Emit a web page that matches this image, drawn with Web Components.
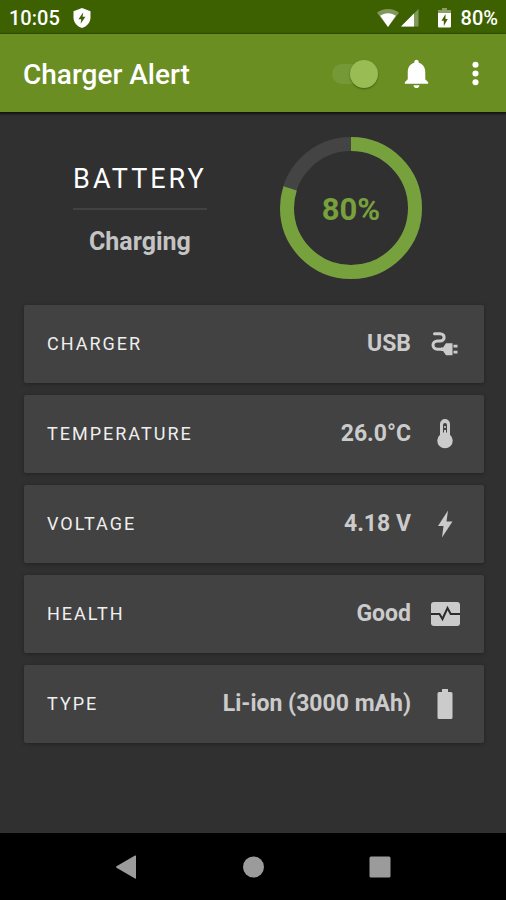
<!DOCTYPE html>
<html lang="en">
<head>
<meta charset="UTF-8">
<meta name="viewport" content="width=device-width, initial-scale=1">
<title>Charger Alert</title>
<style>
  body {
    margin: 0;
    background: #303030;
    font-family: Roboto, "Liberation Sans", sans-serif;
  }
</style>
</head>
<body>
<charger-app></charger-app>

<script>
const ICONS = {
  plug: `
    <path d="M4.500 4.800H10c5.500 0 5.500 7.200 0 7.200H7.500c-6 0-6 8.200 0 8.200H12" fill="none" stroke="currentColor" stroke-width="3" stroke-linecap="round"/>
    <path d="M11 18.500h2l3-4.300h6.500v12H16l-3-4.300h-2zM23.500 15.800h4v2.800h-4zM23.500 21.800h4v2.800h-4z"/>`,
  thermometer: `
    <path fill-rule="evenodd" d="M15 0a5 5 0 0 0-5 5v10.800a7.700 7.700 0 1 0 10 0V5a5 5 0 0 0-5-5zm0 4a2 2 0 0 1 2 2v7.500h-1V11h-2v2.500h-1V6a2 2 0 0 1 2-2zm-.8 3v2h1.600V7z"/>`,
  bolt: `<path d="M18 1.500 8 17h5.500L12 28.500 22.500 12.500h-6z"/>`,
  health: `
    <rect x="1" y="3" width="29" height="24" rx="3"/>
    <path d="M1 15h8.500l3 5 5-11 3.200 6H30" fill="none" stroke="#2c2c2c" stroke-width="2"/>`,
  battery: `<path d="M12 0h6v3h3q1.500 0 1.500 1.500v24q0 1.500-1.500 1.500H9q-1.500 0-1.500-1.500v-24Q7.500 3 9 3h3z"/>`
};

const STATS = [
  { label: "CHARGER", value: "USB", icon: "plug" },
  { label: "TEMPERATURE", value: "26.0°C", icon: "thermometer" },
  { label: "VOLTAGE", value: "4.18 V", icon: "bolt" },
  { label: "HEALTH", value: "Good", icon: "health" },
  { label: "TYPE", value: "Li-ion (3000 mAh)", icon: "battery" }
];

class StatusBar extends HTMLElement {
  constructor() {
    super();
    this.attachShadow({ mode: "open" });
  }

  connectedCallback() {
    this.shadowRoot.innerHTML = /* html */`
      <style>
        :host {
          display: flex;
          justify-content: space-between;
          align-items: center;
          box-sizing: border-box;
          height: 34px;
          padding: 2px 8px 0 9px;
          background: #3d6100;
          color: #fff;
          font-size: 20px;
          font-weight: 500;
          line-height: 24px;
        }
        .group { display: flex; align-items: center; }
        svg { display: block; fill: currentColor; }
        .shield { margin-left: 13px; }
        .signal { margin-left: 2px; }
        .battery { margin: 0 10px 0 19px; }
      </style>
      <div class="group">
        <span>10:05</span>
        <svg class="shield" width="18" height="20" viewBox="0 0 18 20" aria-hidden="true">
          <path fill-rule="evenodd" d="M9 0 .500 3.200V9.500C.500 14.500 4 18.500 9 20c5-1.500 8.500-5.500 8.500-10.500V3.200zm1.200 4.200L5.500 11.300h2.800l-.7 4.500 4.900-7H9.600z"/>
        </svg>
      </div>
      <div class="group">
        <svg width="22" height="18" viewBox="0 0 22 18" aria-hidden="true">
          <path opacity=".35" d="M11 0C6.500 0 2.700 1.500 0 3.800L11 18 22 3.800C19.300 1.500 15.500 0 11 0z"/>
          <path d="M11 4.300c-3.100 0-5.700.9-7.800 2.500L11 18l7.800-11.200C16.700 5.200 14.100 4.300 11 4.300z"/>
        </svg>
        <svg class="signal" width="18" height="18" viewBox="0 0 18 18" aria-hidden="true">
          <path opacity=".35" d="M0 17.500 17.500 0v17.500z"/>
          <path d="M0 17.500 13 4.500v13z"/>
        </svg>
        <svg class="battery" width="13" height="20" viewBox="0 0 13 20" aria-hidden="true">
          <path opacity=".4" d="M4 0h5v2h4v3H0V2h4z"/>
          <path fill-rule="evenodd" d="M0 5h13v13.500q0 1-1 1H1q-1 0-1-1zm7.500 1L3.500 12.700h2.300V18l3.900-7H7.500z"/>
        </svg>
        <span>80%</span>
      </div>
    `;
  }
}

class AppBar extends HTMLElement {
  constructor() {
    super();
    this.attachShadow({ mode: "open" });
  }

  connectedCallback() {
    this.shadowRoot.innerHTML = /* html */`
      <style>
        :host {
          display: flex;
          align-items: center;
          box-sizing: border-box;
          height: 78px;
          padding: 1px 13px 0 23px;
          background: #6b8e23;
          color: #fff;
          box-shadow: 0 1px 2px 1px rgba(0, 0, 0, 0.6);
        }
        h1 {
          flex: 1;
          margin: 0;
          padding-top: 2px;
          font-size: 28px;
          font-weight: 500;
          line-height: 32px;
        }
        /* track and thumb share one grid cell */
        input {
          appearance: none;
          display: grid;
          align-items: center;
          width: 46px;
          height: 28px;
          margin: 0;
        }
        input::before, input::after {
          content: "";
          grid-area: 1 / 1;
        }
        input::before {
          width: 40px;
          height: 20px;
          border-radius: 10px;
          background: #759936;
        }
        input::after {
          width: 28px;
          height: 28px;
          border-radius: 50%;
          background: #9abc54;
          box-shadow: 0 1px 2px rgba(0, 0, 0, 0.35);
        }
        input:checked::after { justify-self: end; }
        button {
          display: block;
          padding: 0;
          border: 0;
          background: none;
          color: inherit;
        }
        .bell { margin: 0 24px 0 21px; }
        svg { display: block; fill: currentColor; }
      </style>
      <h1><slot></slot></h1>
      <input type="checkbox" role="switch" aria-label="Enable alert" checked>
      <button class="bell" type="button" aria-label="Notifications">
        <svg width="35" height="35" viewBox="0 0 24 24"><path d="M12 22c1.100 0 2-.9 2-2h-4c0 1.100.9 2 2 2zm6-6v-5c0-3.070-1.640-5.640-4.500-6.320V4c0-.83-.67-1.500-1.500-1.500s-1.500.67-1.500 1.500v.68C7.630 5.360 6 7.920 6 11v5l-2 2v1h16v-1l-2-2z"/></svg>
      </button>
      <button type="button" aria-label="More options">
        <svg width="35" height="35" viewBox="0 0 24 24"><circle cx="12" cy="6" r="2.100"/><circle cx="12" cy="12" r="2.100"/><circle cx="12" cy="18" r="2.100"/></svg>
      </button>
    `;
  }
}

class BatteryRing extends HTMLElement {
  constructor() {
    super();
    this.attachShadow({ mode: "open" });
  }

  connectedCallback() {
    const level = Number(this.getAttribute("level"));
    this.shadowRoot.innerHTML = /* html */`
      <style>
        :host {
          display: grid;
          place-items: center;
          width: 142px;
          height: 142px;
          color: #77a13d;
          font-size: 31px;
          font-weight: 700;
          line-height: 36px;
        }
        svg, span { grid-area: 1 / 1; }
        span { padding-top: 4px; }
        svg { display: block; transform: rotate(-90deg); }
        circle { fill: none; stroke-width: 14; }
      </style>
      <svg width="142" height="142" viewBox="0 0 142 142" aria-hidden="true">
        <circle cx="71" cy="71" r="64" stroke="#444"/>
        <circle cx="71" cy="71" r="64" stroke="#77a13d" pathLength="100" stroke-dasharray="${level} 100"/>
      </svg>
      <span>${level}%</span>
    `;
  }
}

class BatterySummary extends HTMLElement {
  constructor() {
    super();
    this.attachShadow({ mode: "open" });
  }

  connectedCallback() {
    this.shadowRoot.innerHTML = /* html */`
      <style>
        :host {
          display: flex;
          justify-content: space-evenly;
          align-items: center;
          padding: 25px 11px 26px 0;
        }
        .state {
          padding-top: 4px;
          text-align: center;
        }
        h2 {
          margin: 0;
          padding-bottom: 14px;
          border-bottom: 2px solid #424242;
          color: #fff;
          font-size: 27px;
          font-weight: 400;
          line-height: 30px;
          letter-spacing: 3px;
        }
        p {
          margin: 17px 0 0;
          color: #c4c4c4;
          font-size: 25px;
          font-weight: 700;
          line-height: 30px;
        }
      </style>
      <div class="state">
        <h2>BATTERY</h2>
        <p>${this.getAttribute("state")}</p>
      </div>
      <battery-ring level="${this.getAttribute("level")}"></battery-ring>
    `;
  }
}

class StatCard extends HTMLElement {
  constructor() {
    super();
    this.attachShadow({ mode: "open" });
  }

  connectedCallback() {
    this.shadowRoot.innerHTML = /* html */`
      <style>
        :host {
          display: flex;
          align-items: center;
          gap: 19px;
          height: 78px;
          padding: 0 24px 0 23px;
          border-radius: 2px;
          background: #424242;
          box-shadow: 0 1px 4px rgba(0, 0, 0, 0.3);
          color: #cbcbcb;
        }
        .label {
          flex: 1;
          color: #efefef;
          font-size: 18px;
          line-height: 20px;
          letter-spacing: 2px;
        }
        .value {
          font-size: 23px;
          font-weight: 700;
          line-height: 28px;
        }
        svg { display: block; flex: none; fill: currentColor; }
      </style>
      <span class="label">${this.getAttribute("label")}</span>
      <span class="value"><slot></slot></span>
      <svg width="30" height="30" viewBox="0 0 30 30" aria-hidden="true">${ICONS[this.getAttribute("icon")]}</svg>
    `;
  }
}

class NavBar extends HTMLElement {
  constructor() {
    super();
    this.attachShadow({ mode: "open" });
  }

  connectedCallback() {
    this.shadowRoot.innerHTML = /* html */`
      <style>
        :host {
          display: flex;
          box-sizing: border-box;
          height: 67px;
          padding: 0 12.5%;
          background: #000;
          color: #9b9b9b;
        }
        button {
          flex: 1;
          display: grid;
          place-items: center;
          padding: 0;
          border: 0;
          background: none;
          color: inherit;
        }
        svg { display: block; fill: currentColor; }
      </style>
      <button type="button" aria-label="Back"><svg width="24" height="24" viewBox="0 0 24 24"><path d="M21 1v22q0 1-1 .400L1.500 12.800q-1-.8 0-1.600L20 .600q1-.600 1 .400z"/></svg></button>
      <button type="button" aria-label="Home"><svg width="24" height="24" viewBox="0 0 24 24"><circle cx="12.500" cy="12" r="10.500"/></svg></button>
      <button type="button" aria-label="Recent apps"><svg width="24" height="24" viewBox="0 0 24 24"><rect x="1.500" y="1.500" width="21" height="21" rx="1.500"/></svg></button>
    `;
  }
}

class ChargerApp extends HTMLElement {
  constructor() {
    super();
    this.attachShadow({ mode: "open" });
  }

  renderStats() {
    return STATS.map(stat => `<stat-card label="${stat.label}" icon="${stat.icon}">${stat.value}</stat-card>`).join("");
  }

  connectedCallback() {
    this.shadowRoot.innerHTML = /* html */`
      <style>
        :host {
          display: flex;
          flex-direction: column;
          min-height: 100vh;
        }
        main { flex: 1; }
        .stats {
          display: flex;
          flex-direction: column;
          gap: 12px;
          padding: 0 22px 24px 24px;
        }
      </style>
      <status-bar></status-bar>
      <app-bar>Charger Alert</app-bar>
      <main>
        <battery-summary state="Charging" level="80"></battery-summary>
        <div class="stats">${this.renderStats()}</div>
      </main>
      <nav-bar></nav-bar>
    `;
  }
}

customElements.define("status-bar", StatusBar);
customElements.define("app-bar", AppBar);
customElements.define("battery-ring", BatteryRing);
customElements.define("battery-summary", BatterySummary);
customElements.define("stat-card", StatCard);
customElements.define("nav-bar", NavBar);
customElements.define("charger-app", ChargerApp);
</script>
</body>
</html>
